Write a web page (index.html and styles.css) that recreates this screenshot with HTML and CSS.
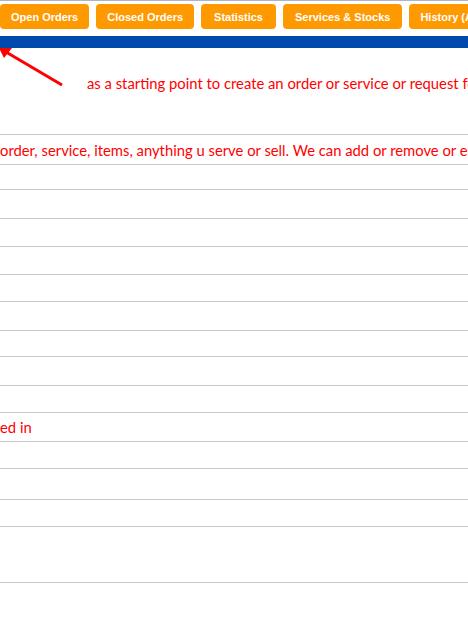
FILE: index.html
```html
<!DOCTYPE html>
<html>
	<head>
		<meta charset="utf-8">
		<title>Orders</title>
		<link rel="stylesheet" href="styles.css">
	</head>
	<body>
		<div class="topbar">
			<a class="btn">Open Orders</a>
			<a class="btn">Closed Orders</a>
			<a class="btn wide">Statistics</a>
			<a class="btn mid">Services &amp; Stocks</a>
			<a class="btn">History (All)</a>
		</div>
		<div class="bluebar"></div>
		<div class="note">
			<svg class="arrow" width="70" height="50" viewBox="0 0 70 50">
				<line x1="62" y1="37" x2="6" y2="4" stroke="#f00" stroke-width="3"/>
				<polygon points="-2,-2 12,0 4,10" fill="#f00"/>
			</svg>
			<span>as a starting point to create an order or service or request for something</span>
		</div>
		<div class="sheet">
			<div class="row h30"><span>order, service, items, anything u serve or sell. We can add or remove or edit them</span></div>
			<div class="row h25"></div>
			<div class="row h29"></div>
			<div class="row h28"></div>
			<div class="row h28"></div>
			<div class="row h27"></div>
			<div class="row h29"></div>
			<div class="row h26"></div>
			<div class="row h29"></div>
			<div class="row h27"></div>
			<div class="row h29"><span>ed in</span></div>
			<div class="row h27"></div>
			<div class="row h31"></div>
			<div class="row h27"></div>
			<div class="row h56"></div>
		</div>
	</body>
</html>
```

FILE: styles.css
```css
* {
	margin: 0;
	padding: 0;
	box-sizing: border-box;
}

html,
body {
	width: 100%;
	height: 100%;
	overflow: hidden;
	background: #fff;
}

/* 顶部按钮 */
.topbar {
	height: 36px;
	border-top: 1px solid #aeb6c2;
	padding-top: 3px;
	display: flex;
	gap: 7px;
	white-space: nowrap;
	overflow: hidden;
}
.btn {
	display: flex;
	align-items: center;
	flex-shrink: 0;
	height: 25px;
	padding: 0 11px;
	background: #ff9900;
	border-radius: 4px;
	color: #fff;
	font-family: "Liberation Sans", Arial, sans-serif;
	font-weight: bold;
	font-size: 11px;
}
.btn.wide {
	padding: 0 13px;
}
.btn.mid {
	padding: 0 12px;
}

.bluebar {
	height: 12px;
	background: #004aad;
}

/* 说明文字 */
.note {
	position: relative;
	height: 86px;
	padding: 26px 0 0 87px;
	color: #f00;
	font-family: Lato, "Open Sans", sans-serif;
	font-size: 14.8px;
	white-space: nowrap;
	overflow: hidden;
}
.note .arrow {
	position: absolute;
	left: 0;
	top: 0;
	overflow: visible;
}

.sheet {
	border-top: 1px solid #c8c8c8;
	color: #f00;
	font-family: Lato, "Open Sans", sans-serif;
	font-size: 14.8px;
	white-space: nowrap;
	overflow: hidden;
}
.row {
	display: flex;
	align-items: center;
	border-bottom: 1px solid #c8c8c8;
}
.h25 { height: 25px; }
.h26 { height: 26px; }
.h27 { height: 27px; }
.h28 { height: 28px; }
.h29 { height: 29px; }
.h30 { height: 30px; }
.h31 { height: 31px; }
.h56 { height: 56px; }
```
